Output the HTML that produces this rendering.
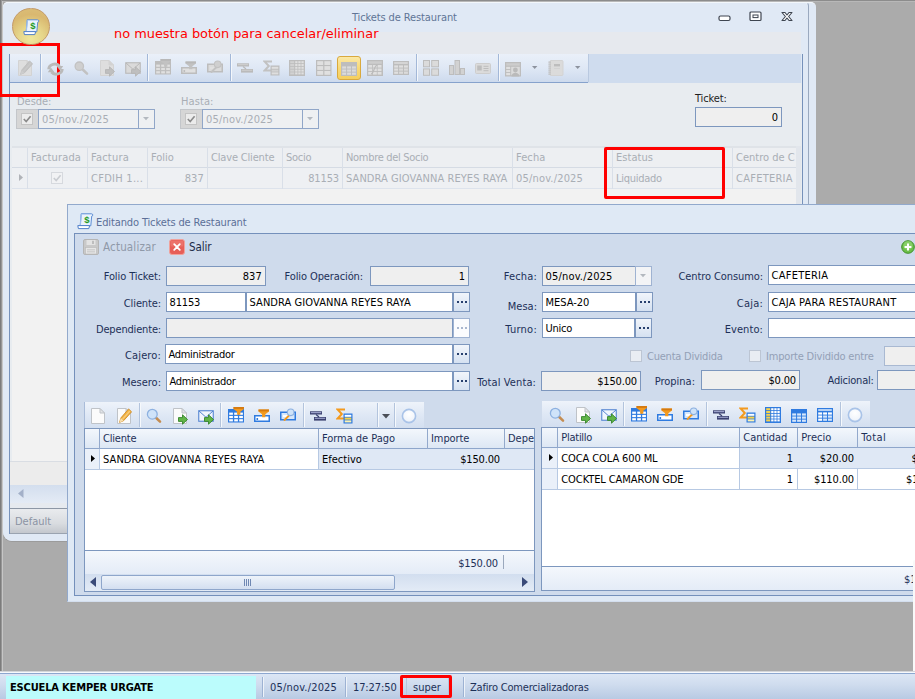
<!DOCTYPE html>
<html lang="es"><head><meta charset="utf-8"><title>Tickets de Restaurant</title>
<style>
html,body{margin:0;padding:0}
body{width:915px;height:699px;overflow:hidden;position:relative;background:#ababab;font:11px "DejaVu Sans Condensed","Liberation Sans",sans-serif;color:#000}
div,span,svg{position:absolute;box-sizing:border-box}
.t{white-space:nowrap;line-height:14px;height:14px;letter-spacing:0}
.g{color:#a9aeb5}
.lbl{color:#1e2f4d}
.f{border:1px solid #7d97be;background:#fff}
.fd{border:1px solid #7d97be;background:#efefef}
.btn{border:1px solid #7d97be;background:linear-gradient(#f1f5fb,#d5e1f1)}
.hd{background:linear-gradient(#f1f5fb,#dbe5f3);border-right:1px solid #94aacd;border-bottom:1px solid #94aacd}

</style></head>
<body>
<div style="left:0px;top:0px;width:915px;height:1px;background:#8c8c8c"></div>
<div style="left:0px;top:1px;width:915px;height:1px;background:#b8b8b8"></div>
<div style="left:0px;top:0px;width:1px;height:672px;background:#7c7c7c"></div>
<div style="left:1px;top:0px;width:1px;height:672px;background:#969696"></div>
<div style="left:2px;top:1px;width:1px;height:671px;background:#c6c6c6"></div>
<div style="left:3px;top:2px;width:812.5px;height:539px;background:#e0e9f5;border-radius:5px 5px 4px 9px;border-top:1px solid #f3f7fb;box-shadow:0 1px 0 #9b9b9b"></div>
<div style="left:3px;top:2px;width:806px;height:539px;background:#e0e9f5;border-radius:5px 4px 0 9px;border-top:1px solid #f3f7fb;border-right:1px solid #9aa9bf"></div>
<div style="left:802px;top:54px;width:1px;height:490px;background:#7691ba"></div>
<div style="left:9px;top:54px;width:1px;height:480px;background:#7691ba"></div>
<div style="left:10px;top:32px;width:791px;height:22px;background:#e6e9ee"></div>
<div style="left:10px;top:54px;width:791px;height:29px;background:#cfdcee"></div>
<div style="left:10px;top:54px;width:578px;height:29px;background:linear-gradient(#eaf0f9 0%,#dfe8f5 50%,#cddaed 100%);border-bottom:1px solid #86a2cc"></div>
<div style="left:10px;top:83px;width:792px;height:451px;background:#e8ecf0"></div>
<span class="t" style="left:352px;top:11px;color:#5f7596;letter-spacing:-0.11px;">Tickets de Restaurant</span>
<div style="left:40px;top:54px;width:1px;height:27px;background:#a3b8d8"></div>
<div style="left:41px;top:54px;width:1px;height:27px;background:#f4f7fb"></div>
<div style="left:147px;top:54px;width:1px;height:27px;background:#a3b8d8"></div>
<div style="left:148px;top:54px;width:1px;height:27px;background:#f4f7fb"></div>
<div style="left:230px;top:54px;width:1px;height:27px;background:#a3b8d8"></div>
<div style="left:231px;top:54px;width:1px;height:27px;background:#f4f7fb"></div>
<div style="left:416px;top:54px;width:1px;height:27px;background:#a3b8d8"></div>
<div style="left:417px;top:54px;width:1px;height:27px;background:#f4f7fb"></div>
<div style="left:498px;top:54px;width:1px;height:27px;background:#a3b8d8"></div>
<div style="left:499px;top:54px;width:1px;height:27px;background:#f4f7fb"></div>
<div style="left:588px;top:54px;width:1px;height:28px;background:#b9c9e0"></div>
<div style="left:337px;top:56px;width:24px;height:24px;background:linear-gradient(#fbe9a6,#f8d978 50%,#f5cf5f);border:1px solid #d9a93e;border-radius:3px"></div>
<span class="t g" style="left:17px;top:95px;letter-spacing:-0.03px;">Desde:</span>
<div style="left:16px;top:109px;width:23px;height:20px;background:#d6d6d6;border:1px solid #c3c6ca"></div>
<div style="left:38px;top:109px;width:101px;height:20px;background:#eef0f2;border:1px solid #90a6c8"></div>
<div style="left:138px;top:109px;width:17px;height:20px;background:#eef0f2;border:1px solid #90a6c8"></div>
<span class="t g" style="left:42px;top:113px;letter-spacing:0.18px;">05/nov./2025</span>
<span class="t g" style="left:181px;top:95px;letter-spacing:0.09px;">Hasta:</span>
<div style="left:180px;top:109px;width:23px;height:20px;background:#d6d6d6;border:1px solid #c3c6ca"></div>
<div style="left:202px;top:109px;width:101px;height:20px;background:#eef0f2;border:1px solid #90a6c8"></div>
<div style="left:302px;top:109px;width:17px;height:20px;background:#eef0f2;border:1px solid #90a6c8"></div>
<span class="t g" style="left:206px;top:113px;letter-spacing:0.18px;">05/nov./2025</span>
<span class="t" style="left:695px;top:92px;color:#1e1e1e;letter-spacing:-0.12px;">Ticket:</span>
<div style="left:695px;top:107px;width:87px;height:20px;background:#efefef;border:1px solid #7d97be"></div>
<span class="t" style="right:137px;top:111px;">0</span>
<div style="left:12px;top:146px;width:784px;height:315px;background:#f2f2f2"></div>
<div style="left:12px;top:146px;width:784px;height:22px;background:#edeff2;border-top:2px solid #dfe3e8;border-bottom:1px solid #d5dbe4"></div>
<div style="left:12px;top:168px;width:784px;height:21px;background:#eef0f3;border-bottom:1px solid #dde3ec"></div>
<div style="left:796px;top:146px;width:5px;height:357px;background:#e2e6ec"></div>
<div style="left:27px;top:148px;width:1px;height:41px;background:#d9dfe8"></div>
<div style="left:87px;top:148px;width:1px;height:41px;background:#d9dfe8"></div>
<div style="left:147px;top:148px;width:1px;height:41px;background:#d9dfe8"></div>
<div style="left:207px;top:148px;width:1px;height:41px;background:#d9dfe8"></div>
<div style="left:282px;top:148px;width:1px;height:41px;background:#d9dfe8"></div>
<div style="left:342px;top:148px;width:1px;height:41px;background:#d9dfe8"></div>
<div style="left:512px;top:148px;width:1px;height:41px;background:#d9dfe8"></div>
<div style="left:612px;top:148px;width:1px;height:41px;background:#d9dfe8"></div>
<div style="left:732px;top:148px;width:1px;height:41px;background:#d9dfe8"></div>
<span class="t g" style="left:31px;top:151px;letter-spacing:0.13px;">Facturada</span>
<span class="t g" style="left:91px;top:151px;letter-spacing:0.22px;">Factura</span>
<span class="t g" style="left:151px;top:151px;letter-spacing:-0.00px;">Folio</span>
<span class="t g" style="left:211px;top:151px;letter-spacing:-0.17px;">Clave Cliente</span>
<span class="t g" style="left:286px;top:151px;letter-spacing:-0.24px;">Socio</span>
<span class="t g" style="left:346px;top:151px;letter-spacing:-0.31px;">Nombre del Socio</span>
<span class="t g" style="left:516px;top:151px;letter-spacing:0.09px;">Fecha</span>
<span class="t g" style="left:616px;top:151px;letter-spacing:0.05px;">Estatus</span>
<span class="t g" style="left:736px;top:151px;">Centro de C</span>
<span class="t g" style="left:91px;top:172px;letter-spacing:0.27px;">CFDIH 1...</span>
<span class="t g" style="right:711px;top:172px;letter-spacing:0.14px;">837</span>
<span class="t g" style="right:576px;top:172px;letter-spacing:-0.14px;">81153</span>
<span class="t g" style="left:346px;top:172px;letter-spacing:0.07px;">SANDRA GIOVANNA REYES RAYA</span>
<span class="t g" style="left:516px;top:172px;letter-spacing:0.18px;">05/nov./2025</span>
<span class="t g" style="left:616px;top:172px;letter-spacing:-0.27px;">Liquidado</span>
<span class="t g" style="left:736px;top:172px;letter-spacing:0.26px;">CAFETERIA</span>
<div style="left:10px;top:461px;width:60px;height:24px;background:#ececec;border-top:1px solid #d9dde3"></div>
<div style="left:10px;top:485px;width:60px;height:18px;background:linear-gradient(#d3deee,#e4ebf5)"></div>
<div style="left:10px;top:503px;width:60px;height:5px;background:#e6eaef"></div>
<div style="left:10px;top:508px;width:60px;height:26px;background:linear-gradient(#e9ebee,#d9dce0 60%,#c3c7cd);border-top:1px solid #8d97a5;border-bottom:1px solid #9aa3b0"></div>
<span class="t" style="left:15px;top:515px;color:#8b93a3;letter-spacing:-0.01px;">Default</span>
<div style="left:67px;top:204px;width:860px;height:398px;background:#dfe9f5;border:1px solid #92a9cc;border-bottom-color:#d3deee"></div>
<div style="left:74px;top:233px;width:860px;height:363px;background:#cfdbec;border:1px solid #7490bb"></div>
<span class="t" style="left:96px;top:216px;color:#5b6f98;letter-spacing:-0.12px;">Editando Tickets de Restaurant</span>
<span class="t" style="left:103px;top:240px;color:#8f99a8;font-size:11.5px;letter-spacing:0.17px;">Actualizar</span>
<span class="t" style="left:189px;top:240px;color:#1b2a47;font-size:11.5px;letter-spacing:-0.08px;">Salir</span>
<span class="t" style="right:754px;top:270px;color:#1d3058;letter-spacing:-0.10px;">Folio Ticket:</span>
<div class="fd" style="left:166px;top:266px;width:100px;height:20px;"></div>
<span class="t" style="right:653px;top:270px;letter-spacing:0.14px;">837</span>
<span class="t" style="right:552px;top:270px;color:#1d3058;letter-spacing:-0.11px;">Folio Operación:</span>
<div class="fd" style="left:370px;top:266px;width:99px;height:20px;"></div>
<span class="t" style="right:450px;top:270px;">1</span>
<span class="t" style="right:754px;top:296.5px;color:#1d3058;letter-spacing:-0.11px;">Cliente:</span>
<div class="f" style="left:166px;top:292px;width:80px;height:20px;"></div>
<span class="t" style="left:169.5px;top:296px;letter-spacing:-0.14px;">81153</span>
<div class="f" style="left:246px;top:292px;width:207px;height:20px;"></div>
<span class="t" style="left:249.5px;top:296px;letter-spacing:0.07px;">SANDRA GIOVANNA REYES RAYA</span>
<div class="btn" style="left:453px;top:292px;width:17px;height:20px;border-color:#7d97be"><i style="position:absolute;left:3px;top:8px;width:2px;height:2px;background:#27406e;box-shadow:4px 0 #27406e,8px 0 #27406e"></i></div>
<span class="t" style="right:754px;top:323px;color:#1d3058;letter-spacing:-0.17px;">Dependiente:</span>
<div class="fd" style="left:166px;top:318px;width:287px;height:20px;"></div>
<div class="btn" style="left:453px;top:318px;width:17px;height:20px;background:#fbfcfe;border-color:#9fb3d2"><i style="position:absolute;left:3px;top:8px;width:2px;height:2px;background:#a9b7cf;box-shadow:4px 0 #a9b7cf,8px 0 #a9b7cf"></i></div>
<span class="t" style="right:754px;top:349px;color:#1d3058;letter-spacing:0.14px;">Cajero:</span>
<div class="f" style="left:165px;top:344px;width:288px;height:20px;"></div>
<span class="t" style="left:168.5px;top:348px;letter-spacing:-0.30px;">Administrador</span>
<div class="btn" style="left:453px;top:344px;width:17px;height:20px;border-color:#7d97be"><i style="position:absolute;left:3px;top:8px;width:2px;height:2px;background:#27406e;box-shadow:4px 0 #27406e,8px 0 #27406e"></i></div>
<span class="t" style="right:754px;top:376px;color:#1d3058;letter-spacing:-0.01px;">Mesero:</span>
<div class="f" style="left:166px;top:371px;width:287px;height:20px;"></div>
<span class="t" style="left:169.5px;top:375px;letter-spacing:-0.30px;">Administrador</span>
<div class="btn" style="left:453px;top:371px;width:17px;height:20px;border-color:#7d97be"><i style="position:absolute;left:3px;top:8px;width:2px;height:2px;background:#27406e;box-shadow:4px 0 #27406e,8px 0 #27406e"></i></div>
<span class="t" style="right:378px;top:270px;color:#1d3058;letter-spacing:0.15px;">Fecha:</span>
<div class="fd" style="left:542px;top:266px;width:94px;height:20px;"></div>
<span class="t" style="left:545.5px;top:270px;letter-spacing:0.18px;">05/nov./2025</span>
<div style="left:635px;top:266px;width:17px;height:20px;background:#f3f4f6;border:1px solid #9fb3d2"></div>
<span class="t" style="right:378px;top:299.5px;color:#1d3058;letter-spacing:0.00px;">Mesa:</span>
<div class="f" style="left:542px;top:292px;width:94px;height:20px;"></div>
<span class="t" style="left:545.5px;top:296px;letter-spacing:-0.04px;">MESA-20</span>
<div class="btn" style="left:636px;top:292px;width:17px;height:20px;border-color:#7d97be"><i style="position:absolute;left:3px;top:8px;width:2px;height:2px;background:#27406e;box-shadow:4px 0 #27406e,8px 0 #27406e"></i></div>
<span class="t" style="right:378px;top:323px;color:#1d3058;letter-spacing:0.25px;">Turno:</span>
<div class="f" style="left:542px;top:318px;width:93px;height:20px;"></div>
<span class="t" style="left:545.5px;top:322px;letter-spacing:-0.23px;">Unico</span>
<div class="btn" style="left:635px;top:318px;width:17px;height:20px;border-color:#7d97be"><i style="position:absolute;left:3px;top:8px;width:2px;height:2px;background:#27406e;box-shadow:4px 0 #27406e,8px 0 #27406e"></i></div>
<span class="t" style="right:379px;top:375.5px;color:#1d3058;letter-spacing:0.10px;">Total Venta:</span>
<div class="fd" style="left:541px;top:371px;width:100px;height:20px;"></div>
<span class="t" style="right:278px;top:375px;letter-spacing:-0.15px;">$150.00</span>
<span class="t" style="right:152px;top:270px;color:#1d3058;letter-spacing:-0.09px;">Centro Consumo:</span>
<div class="f" style="left:768px;top:265px;width:160px;height:20px;"></div>
<span class="t" style="left:771.5px;top:269px;letter-spacing:0.26px;">CAFETERIA</span>
<span class="t" style="right:152px;top:297px;color:#1d3058;letter-spacing:0.21px;">Caja:</span>
<div class="f" style="left:768px;top:292px;width:160px;height:20px;"></div>
<span class="t" style="left:771.5px;top:296px;letter-spacing:0.25px;">CAJA PARA RESTAURANT</span>
<span class="t" style="right:152px;top:323px;color:#1d3058;letter-spacing:0.08px;">Evento:</span>
<div class="f" style="left:768px;top:318px;width:160px;height:20px;"></div>
<div style="left:630px;top:350px;width:12px;height:12px;background:#e9edf3;border:1px solid #bcc5d3"></div>
<span class="t" style="left:647px;top:350px;color:#93a0b6;letter-spacing:-0.23px;">Cuenta Dividida</span>
<div style="left:749px;top:350px;width:12px;height:12px;background:#e9edf3;border:1px solid #bcc5d3"></div>
<span class="t" style="left:766px;top:350px;color:#93a0b6;letter-spacing:-0.19px;">Importe Dividido entre</span>
<div style="left:884px;top:346px;width:50px;height:20px;background:#efefef;border:1px solid #a9b9d2"></div>
<span class="t" style="right:220px;top:375px;color:#1d3058;letter-spacing:-0.01px;">Propina:</span>
<div class="fd" style="left:701px;top:370px;width:99px;height:20px;"></div>
<span class="t" style="right:119px;top:374px;letter-spacing:-0.15px;">$0.00</span>
<span class="t" style="right:41.299999999999955px;top:374px;color:#1d3058;letter-spacing:-0.21px;">Adicional:</span>
<div class="fd" style="left:877px;top:370px;width:60px;height:20px;"></div>
<div style="left:84px;top:402px;width:340px;height:26px;background:linear-gradient(#eef3fa,#dfe8f5 50%,#d3dff0)"></div>
<div style="left:139px;top:403px;width:1px;height:24px;background:#b3c4dd"></div>
<div style="left:140px;top:403px;width:1px;height:24px;background:#f6f9fc"></div>
<div style="left:220px;top:403px;width:1px;height:24px;background:#b3c4dd"></div>
<div style="left:221px;top:403px;width:1px;height:24px;background:#f6f9fc"></div>
<div style="left:303px;top:403px;width:1px;height:24px;background:#b3c4dd"></div>
<div style="left:304px;top:403px;width:1px;height:24px;background:#f6f9fc"></div>
<div style="left:377px;top:403px;width:1px;height:24px;background:#b3c4dd"></div>
<div style="left:378px;top:403px;width:1px;height:24px;background:#f6f9fc"></div>
<div style="left:394px;top:403px;width:1px;height:24px;background:#b3c4dd"></div>
<div style="left:395px;top:403px;width:1px;height:24px;background:#f6f9fc"></div>
<div style="left:84px;top:402px;width:1px;height:26px;background:#a9bcd9"></div>
<div style="left:84px;top:428px;width:451px;height:164px;background:#fff;border:1px solid #7d97be"></div>
<div style="left:85px;top:429px;width:449px;height:20px;background:linear-gradient(#f3f7fc,#dde7f4);border-bottom:1px solid #8ea6cb"></div>
<div style="left:99px;top:429px;width:1px;height:20px;background:#93a9cc"></div>
<div style="left:99px;top:449px;width:1px;height:20px;background:#b7c9e3"></div>
<div style="left:318px;top:429px;width:1px;height:20px;background:#93a9cc"></div>
<div style="left:318px;top:449px;width:1px;height:20px;background:#b7c9e3"></div>
<div style="left:427px;top:429px;width:1px;height:20px;background:#93a9cc"></div>
<div style="left:427px;top:449px;width:1px;height:20px;background:#b7c9e3"></div>
<div style="left:504px;top:429px;width:1px;height:20px;background:#93a9cc"></div>
<div style="left:504px;top:449px;width:1px;height:20px;background:#b7c9e3"></div>
<div style="left:85px;top:449px;width:14px;height:20px;background:#eaf0f9"></div>
<div style="left:100px;top:449px;width:218px;height:20px;background:#fff"></div>
<div style="left:319px;top:449px;width:215px;height:20px;background:#dfe8f5"></div>
<div style="left:85px;top:469px;width:449px;height:1px;background:#b7c9e3"></div>
<span class="t" style="left:103px;top:432px;color:#1d3058;letter-spacing:-0.19px;">Cliente</span>
<span class="t" style="left:322px;top:432px;color:#1d3058;letter-spacing:-0.04px;">Forma de Pago</span>
<span class="t" style="left:431px;top:432px;color:#1d3058;letter-spacing:-0.09px;">Importe</span>
<span class="t" style="left:508px;top:432px;color:#1d3058;">Depe</span>
<span class="t" style="left:103px;top:453px;letter-spacing:0.07px;">SANDRA GIOVANNA REYES RAYA</span>
<span class="t" style="left:322px;top:453px;letter-spacing:0.01px;">Efectivo</span>
<span class="t" style="right:415px;top:453px;letter-spacing:-0.15px;">$150.00</span>
<div style="left:85px;top:550px;width:449px;height:24px;background:linear-gradient(#f4f7fc,#e4ecf7);border-top:1px solid #7d97be"></div>
<span class="t" style="right:417px;top:557px;color:#1d3058;letter-spacing:-0.15px;">$150.00</span>
<div style="left:503px;top:555px;width:1px;height:14px;background:#9aa8bd"></div>
<div style="left:85px;top:574px;width:449px;height:17px;background:linear-gradient(#d2deef,#e3ebf6)"></div>
<div style="left:101px;top:575px;width:294px;height:15px;background:linear-gradient(#eef3fa,#d3dff0);border:1px solid #8ea6cb;border-radius:2px"></div>
<div style="left:244px;top:579px;width:1px;height:7px;background:#6f88b3"></div>
<div style="left:246px;top:579px;width:1px;height:7px;background:#6f88b3"></div>
<div style="left:248px;top:579px;width:1px;height:7px;background:#6f88b3"></div>
<div style="left:250px;top:579px;width:1px;height:7px;background:#6f88b3"></div>
<div style="left:542px;top:401px;width:328px;height:26px;background:linear-gradient(#eef3fa,#dfe8f5 50%,#d3dff0)"></div>
<div style="left:623px;top:402px;width:1px;height:24px;background:#b3c4dd"></div>
<div style="left:624px;top:402px;width:1px;height:24px;background:#f6f9fc"></div>
<div style="left:706px;top:402px;width:1px;height:24px;background:#b3c4dd"></div>
<div style="left:707px;top:402px;width:1px;height:24px;background:#f6f9fc"></div>
<div style="left:840px;top:402px;width:1px;height:24px;background:#b3c4dd"></div>
<div style="left:841px;top:402px;width:1px;height:24px;background:#f6f9fc"></div>
<div style="left:541px;top:427px;width:400px;height:164px;background:#fff;border:1px solid #7d97be"></div>
<div style="left:542px;top:428px;width:398px;height:20px;background:linear-gradient(#f3f7fc,#dde7f4);border-bottom:1px solid #8ea6cb"></div>
<div style="left:557px;top:428px;width:1px;height:20px;background:#93a9cc"></div>
<div style="left:557px;top:448px;width:1px;height:42px;background:#b7c9e3"></div>
<div style="left:739px;top:428px;width:1px;height:20px;background:#93a9cc"></div>
<div style="left:739px;top:448px;width:1px;height:42px;background:#b7c9e3"></div>
<div style="left:797px;top:428px;width:1px;height:20px;background:#93a9cc"></div>
<div style="left:797px;top:448px;width:1px;height:42px;background:#b7c9e3"></div>
<div style="left:857px;top:428px;width:1px;height:20px;background:#93a9cc"></div>
<div style="left:857px;top:448px;width:1px;height:42px;background:#b7c9e3"></div>
<div style="left:542px;top:448px;width:15px;height:41px;background:#eaf0f9"></div>
<div style="left:558px;top:448px;width:181px;height:20px;background:#fff"></div>
<div style="left:740px;top:448px;width:200px;height:20px;background:#dfe8f5"></div>
<div style="left:542px;top:468px;width:398px;height:1px;background:#b7c9e3"></div>
<div style="left:542px;top:489px;width:398px;height:1px;background:#b7c9e3"></div>
<span class="t" style="left:561.3px;top:431px;color:#1d3058;letter-spacing:-0.27px;">Platillo</span>
<span class="t" style="left:743.3px;top:431px;color:#1d3058;letter-spacing:-0.06px;">Cantidad</span>
<span class="t" style="left:801.3px;top:431px;color:#1d3058;letter-spacing:-0.01px;">Precio</span>
<span class="t" style="left:861.3px;top:431px;color:#1d3058;letter-spacing:0.36px;">Total</span>
<span class="t" style="left:561.3px;top:452px;letter-spacing:-0.11px;">COCA COLA 600 ML</span>
<span class="t" style="right:122px;top:452px;">1</span>
<span class="t" style="right:61px;top:452px;letter-spacing:-0.07px;">$20.00</span>
<span class="t" style="left:911.5px;top:452px;letter-spacing:-0.07px;">$20.00</span>
<span class="t" style="left:561.3px;top:473px;letter-spacing:-0.09px;">COCKTEL CAMARON GDE</span>
<span class="t" style="right:122px;top:473px;">1</span>
<span class="t" style="right:61px;top:473px;letter-spacing:-0.13px;">$110.00</span>
<span class="t" style="left:906px;top:473px;letter-spacing:-0.13px;">$110.00</span>
<div style="left:542px;top:566px;width:398px;height:24px;background:linear-gradient(#f4f7fc,#e4ecf7);border-top:1px solid #7d97be"></div>
<span class="t" style="left:904px;top:573px;color:#1d3058;">$130.00</span>
<div style="left:913px;top:560px;width:2px;height:120px;background:#f9f9f9;border-radius:2px 0 0 2px"></div>
<div style="left:0px;top:671px;width:915px;height:1px;background:#d4d6d9"></div>
<div style="left:0px;top:672px;width:915px;height:27px;background:linear-gradient(#dde7f5,#cfdcee 45%,#b8cae3);border-top:1px solid #f7f9fc"></div>
<div style="left:0px;top:673px;width:915px;height:1px;background:#8ca7cf"></div>
<div style="left:6px;top:676px;width:250px;height:23px;background:#bbfcfc"></div>
<span class="t" style="left:10px;top:681px;font-weight:bold;letter-spacing:-0.16px;">ESCUELA KEMPER URGATE</span>
<div style="left:406px;top:678px;width:1px;height:18px;background:#b5c6de"></div>
<div style="left:448px;top:678px;width:1px;height:18px;background:#b5c6de"></div>
<div style="left:262px;top:677px;width:1px;height:20px;background:#9db2d3"></div>
<div style="left:263px;top:677px;width:1px;height:20px;background:#eef3f9"></div>
<div style="left:345px;top:677px;width:1px;height:20px;background:#9db2d3"></div>
<div style="left:346px;top:677px;width:1px;height:20px;background:#eef3f9"></div>
<div style="left:463px;top:677px;width:1px;height:20px;background:#9db2d3"></div>
<div style="left:464px;top:677px;width:1px;height:20px;background:#eef3f9"></div>
<span class="t" style="left:270px;top:681px;color:#1d3058;letter-spacing:0.18px;">05/nov./2025</span>
<span class="t" style="left:353px;top:681px;color:#1d3058;letter-spacing:-0.11px;">17:27:50</span>
<span class="t" style="left:413px;top:681px;color:#1d3058;letter-spacing:0.01px;">super</span>
<span class="t" style="left:470px;top:681px;color:#1d3058;letter-spacing:-0.19px;">Zafiro Comercializadoras</span>
<div style="left:0px;top:43px;width:60px;height:53.5px;border:3px solid #f00;border-left-width:2px"></div>
<div style="left:604px;top:147px;width:121px;height:51.5px;border:3px solid #f00;border-radius:2px"></div>
<div style="left:400px;top:675px;width:52px;height:23px;border:3px solid #f00;border-radius:2px"></div>
<span class="t" style="left:114px;top:25px;color:#f00;font:12.9px 'DejaVu Sans','Liberation Sans',sans-serif;line-height:18px;height:18px;letter-spacing:0.00px;">no muestra botón para cancelar/eliminar</span>
<svg style="left:18px;top:60px;" width="15" height="16" viewBox="0 0 15 16"><path d="M0.5,0.5h8.5l4.5,4.5v10.5h-13z" fill="#dedede" stroke="#d3d3d3"/><path d="M9,0.5v4.5h4.5z" fill="#d2d2d2" stroke="#d3d3d3" stroke-linejoin="round"/><path d="M11.6,0.9l3,2.9l-8,8.9l-4.1,1.7l1.3,-4.4z" fill="#c4c4c4" stroke="#bcbcbc" stroke-width="0.8" stroke-linejoin="round"/><path d="M3.8,10l2.8,2.7l-4.1,1.7z" fill="#cdcdcd"/><path d="M12.4,2.6l1,1l-7.4,8.2l-1,-1z" fill="#cdcdcd" opacity="0.55"/></svg>
<svg style="left:47px;top:61px;" width="17" height="16" viewBox="0 0 17 16"><path d="M1.8,8.2A6,5.2 0 0 1 12.6,5.2" fill="none" stroke="#bababa" stroke-width="3"/><path d="M9.6,5h6.6l-3.1,4.8z" fill="#bababa"/><path d="M15.2,8A6,5.2 0 0 1 4.4,11" fill="none" stroke="#bababa" stroke-width="3"/><path d="M0.8,11.2h6.6l-3.5,-4.8z" fill="#bababa"/></svg>
<svg style="left:73px;top:60px;" width="16" height="16" viewBox="0 0 16 16"><line x1="10" y1="9.8" x2="14" y2="13.6" stroke="#c2c2c2" stroke-width="2.6" stroke-linecap="round"/><circle cx="6.3" cy="6.2" r="4.2" fill="#cfcfcf" stroke="#c2c2c2" stroke-width="1.3"/></svg>
<svg style="left:100px;top:60px;" width="16" height="17" viewBox="0 0 16 17"><path d="M0.5,0.5h8.5l4.5,4.5v10.5h-13z" fill="#dedede" stroke="#d3d3d3"/><path d="M9,0.5v4.5h4.5z" fill="#d2d2d2" stroke="#d3d3d3" stroke-linejoin="round"/><path transform="translate(5,6)" d="M0.5,3.6h4v-2.8l5,4.7l-5,4.7v-2.8h-4z" fill="#bfbfbf" stroke="#b5b5b5" stroke-width="0.9" stroke-linejoin="round"/></svg>
<svg style="left:125px;top:60px;" width="17" height="17" viewBox="0 0 17 17"><rect x="0.75" y="2.75" width="14.5" height="10.5" fill="#dadada" stroke="#b9b9b9" stroke-width="1.1"/><path d="M1,3l7,6.3l7,-6.3" fill="none" stroke="#b9b9b9" stroke-width="1"/><path transform="translate(6,6)" d="M0.5,3.6h4v-2.8l5,4.7l-5,4.7v-2.8h-4z" fill="#bfbfbf" stroke="#b5b5b5" stroke-width="0.9" stroke-linejoin="round"/></svg>
<svg style="left:155px;top:59px;" width="16" height="16" viewBox="0 0 16 16"><rect x="0" y="2" width="16" height="13.5" fill="#bdbdbd"/><rect x="1.2" y="5.6" width="3.7" height="2.2" fill="#e0e0e0"/><rect x="6.2" y="5.6" width="3.7" height="2.2" fill="#e0e0e0"/><rect x="11.2" y="5.6" width="3.7" height="2.2" fill="#e0e0e0"/><rect x="1.2" y="8.899999999999999" width="3.7" height="2.2" fill="#e0e0e0"/><rect x="6.2" y="8.899999999999999" width="3.7" height="2.2" fill="#e0e0e0"/><rect x="11.2" y="8.899999999999999" width="3.7" height="2.2" fill="#e0e0e0"/><rect x="1.2" y="12.2" width="3.7" height="2.2" fill="#e0e0e0"/><rect x="6.2" y="12.2" width="3.7" height="2.2" fill="#e0e0e0"/><rect x="11.2" y="12.2" width="3.7" height="2.2" fill="#e0e0e0"/><path transform="translate(5.5,0) scale(0.95)" d="M0,0h11v2.2l-3.8,2.8v3.2h-3.4v-3.2l-3.8,-2.8z" fill="#c2c2c2"/><path transform="translate(5.5,0) scale(0.95)" d="M0,0h11v2h-11z" fill="#b8b8b8"/></svg>
<svg style="left:181px;top:60px;" width="16" height="16" viewBox="0 0 16 16"><rect x="0.75" y="7.75" width="14.5" height="5.5" fill="#e0e0e0" stroke="#bdbdbd" stroke-width="1.5"/><rect x="2.5" y="10" width="1.6" height="2" fill="#bdbdbd"/><path transform="translate(4.5,1.5) scale(0.95)" d="M0,0h11v2.2l-3.8,2.8v3.2h-3.4v-3.2l-3.8,-2.8z" fill="#c2c2c2"/><path transform="translate(4.5,1.5) scale(0.95)" d="M0,0h11v2h-11z" fill="#b8b8b8"/></svg>
<svg style="left:207px;top:59px;" width="16" height="16" viewBox="0 0 16 16"><rect x="0.75" y="5.25" width="14.5" height="7.5" fill="#dbdbdb" stroke="#bdbdbd" stroke-width="1.5"/><rect x="3" y="8" width="6" height="2" fill="#e0e0e0"/><line x1="9" y1="8.5" x2="4.5" y2="13" stroke="#c2c2c2" stroke-width="1.8" stroke-linecap="round"/><circle cx="10.7" cy="5.3" r="3.3" fill="#cfcfcf" stroke="#c2c2c2" stroke-width="1.1"/></svg>
<svg style="left:237px;top:60px;" width="16" height="16" viewBox="0 0 16 16"><rect x="0" y="3.3" width="12" height="3.2" fill="#bababa"/><rect x="0.8" y="4" width="10.4" height="1.2" fill="#cdcdcd"/><rect x="4" y="9" width="12" height="3.6" fill="#bababa"/><rect x="4.8" y="9.7" width="10.4" height="1.2" fill="#cdcdcd"/><path d="M6,6.5l3,2.5" stroke="#bababa" stroke-width="1.2"/></svg>
<svg style="left:263px;top:60px;" width="17" height="16" viewBox="0 0 17 16"><path d="M9,1.4h-7.4l4.2,4.6l-4.2,4.6h7.4" fill="none" stroke="#c2c2c2" stroke-width="2" stroke-linejoin="miter"/><rect x="7.5" y="5.5" width="9" height="10" fill="#bdbdbd"/><rect x="8.7" y="6.8" width="6.6" height="2" fill="#e0e0e0"/><rect x="8.7" y="9.6" width="6.6" height="2" fill="#d2d2d2"/><rect x="8.7" y="12.4" width="6.6" height="2" fill="#dedede"/></svg>
<svg style="left:289px;top:60px;" width="16" height="16" viewBox="0 0 16 16"><rect x="0" y="0" width="16" height="16" fill="#bdbdbd"/><rect x="1.2" y="1.2" width="4" height="2" fill="#d2d2d2"/><rect x="6.2" y="1.2" width="2.3" height="2" fill="#e0e0e0"/><rect x="9.3" y="1.2" width="2.3" height="2" fill="#e0e0e0"/><rect x="12.4" y="1.2" width="2.3" height="2" fill="#e0e0e0"/><rect x="1.2" y="4.0" width="4" height="2" fill="#d2d2d2"/><rect x="6.2" y="4.0" width="2.3" height="2" fill="#e0e0e0"/><rect x="9.3" y="4.0" width="2.3" height="2" fill="#e0e0e0"/><rect x="12.4" y="4.0" width="2.3" height="2" fill="#e0e0e0"/><rect x="1.2" y="6.8" width="4" height="2" fill="#d2d2d2"/><rect x="6.2" y="6.8" width="2.3" height="2" fill="#e0e0e0"/><rect x="9.3" y="6.8" width="2.3" height="2" fill="#e0e0e0"/><rect x="12.4" y="6.8" width="2.3" height="2" fill="#e0e0e0"/><rect x="1.2" y="9.599999999999998" width="4" height="2" fill="#d2d2d2"/><rect x="6.2" y="9.599999999999998" width="2.3" height="2" fill="#e0e0e0"/><rect x="9.3" y="9.599999999999998" width="2.3" height="2" fill="#e0e0e0"/><rect x="12.4" y="9.599999999999998" width="2.3" height="2" fill="#e0e0e0"/><rect x="1.2" y="12.399999999999999" width="4" height="2" fill="#d2d2d2"/><rect x="6.2" y="12.399999999999999" width="2.3" height="2" fill="#e0e0e0"/><rect x="9.3" y="12.399999999999999" width="2.3" height="2" fill="#e0e0e0"/><rect x="12.4" y="12.399999999999999" width="2.3" height="2" fill="#e0e0e0"/></svg>
<svg style="left:316px;top:60px;" width="16" height="16" viewBox="0 0 16 16"><rect x="0" y="0" width="15.5" height="16" fill="#bdbdbd"/><rect x="1.2" y="1.2" width="6" height="3.8" fill="#e0e0e0"/><rect x="8.4" y="1.2" width="6" height="3.8" fill="#e0e0e0"/><rect x="1.2" y="6.1000000000000005" width="6" height="3.8" fill="#e0e0e0"/><rect x="8.4" y="6.1000000000000005" width="6" height="3.8" fill="#e0e0e0"/><rect x="1.2" y="11.0" width="6" height="3.8" fill="#e0e0e0"/><rect x="8.4" y="11.0" width="6" height="3.8" fill="#e0e0e0"/></svg>
<svg style="left:341px;top:62px;" width="16" height="14" viewBox="0 0 16 14"><rect x="0" y="0" width="16" height="14" fill="#bdbdbd"/><rect x="1.2" y="4.4" width="3.9" height="2.20" fill="#dbdbdb"/><rect x="6.1000000000000005" y="4.4" width="3.9" height="2.20" fill="#dbdbdb"/><rect x="11.0" y="4.4" width="3.9" height="2.20" fill="#dbdbdb"/><rect x="1.2" y="7.5" width="3.9" height="2.20" fill="#dbdbdb"/><rect x="6.1000000000000005" y="7.5" width="3.9" height="2.20" fill="#dbdbdb"/><rect x="11.0" y="7.5" width="3.9" height="2.20" fill="#dbdbdb"/><rect x="1.2" y="10.6" width="3.9" height="2.20" fill="#dbdbdb"/><rect x="6.1000000000000005" y="10.6" width="3.9" height="2.20" fill="#dbdbdb"/><rect x="11.0" y="10.6" width="3.9" height="2.20" fill="#dbdbdb"/></svg>
<svg style="left:367px;top:60px;" width="16" height="16" viewBox="0 0 16 16"><rect x="0" y="0" width="16" height="16" fill="#bdbdbd"/><rect x="1.2" y="1.2" width="13.6" height="2.6" fill="#cdcdcd"/><rect x="1.2" y="5.0" width="3.9" height="2.6" fill="#e0e0e0"/><rect x="5.9" y="5.0" width="3.9" height="2.6" fill="#e0e0e0"/><rect x="10.6" y="5.0" width="3.9" height="2.6" fill="#e0e0e0"/><rect x="1.2" y="8.5" width="3.9" height="2.6" fill="#e0e0e0"/><rect x="5.9" y="8.5" width="3.9" height="2.6" fill="#e0e0e0"/><rect x="10.6" y="8.5" width="3.9" height="2.6" fill="#e0e0e0"/><rect x="1.2" y="12.0" width="3.9" height="2.6" fill="#e0e0e0"/><rect x="5.9" y="12.0" width="3.9" height="2.6" fill="#e0e0e0"/><rect x="10.6" y="12.0" width="3.9" height="2.6" fill="#e0e0e0"/><path d="M4,14c3,0 3,-9 6.5,-9" fill="none" stroke="#bababa" stroke-width="1.2"/></svg>
<svg style="left:393px;top:61px;" width="16" height="14" viewBox="0 0 16 14"><rect x="0" y="0" width="16" height="14" fill="#bdbdbd"/><rect x="1.2" y="1.2" width="13.6" height="1.6" fill="#dbdbdb"/><rect x="1.2" y="4.4" width="3.9" height="2.2" fill="#e0e0e0"/><rect x="6.1000000000000005" y="4.4" width="3.9" height="2.2" fill="#e0e0e0"/><rect x="11.0" y="4.4" width="3.9" height="2.2" fill="#e0e0e0"/><rect x="1.2" y="7.5" width="3.9" height="2.2" fill="#e0e0e0"/><rect x="6.1000000000000005" y="7.5" width="3.9" height="2.2" fill="#dbdbdb"/><rect x="11.0" y="7.5" width="3.9" height="2.2" fill="#dbdbdb"/><rect x="1.2" y="10.600000000000001" width="3.9" height="2.2" fill="#e0e0e0"/><rect x="6.1000000000000005" y="10.600000000000001" width="3.9" height="2.2" fill="#dbdbdb"/><rect x="11.0" y="10.600000000000001" width="3.9" height="2.2" fill="#dbdbdb"/></svg>
<svg style="left:423px;top:60px;" width="16" height="16" viewBox="0 0 16 16"><rect x="0.5" y="0.5" width="6" height="6.3" fill="#dbdbdb" stroke="#bdbdbd"/><rect x="8.7" y="0.5" width="6.8" height="6.3" fill="#dbdbdb" stroke="#bdbdbd"/><rect x="0.5" y="8.9" width="6" height="6.4" fill="#dbdbdb" stroke="#bdbdbd"/><rect x="8.7" y="8.9" width="6.8" height="6.4" fill="#dbdbdb" stroke="#bdbdbd"/></svg>
<svg style="left:449px;top:60px;" width="16" height="16" viewBox="0 0 16 16"><rect x="0.5" y="5.5" width="4" height="9" fill="#d2d2d2" stroke="#bdbdbd"/><rect x="6.0" y="0.5" width="4.5" height="14" fill="#d2d2d2" stroke="#bdbdbd"/><rect x="11.5" y="8.5" width="4" height="6" fill="#d2d2d2" stroke="#bdbdbd"/></svg>
<svg style="left:475px;top:63px;" width="16" height="11" viewBox="0 0 16 11"><rect x="0.5" y="0.5" width="15" height="10" rx="1" fill="#dbdbdb" stroke="#cdcdcd"/><rect x="2.2" y="2.5" width="4.5" height="5" fill="#bdbdbd"/><rect x="8.5" y="2.8" width="5" height="1" fill="#bdbdbd"/><rect x="8.5" y="5" width="5" height="1" fill="#bdbdbd"/><rect x="8.5" y="7.2" width="5" height="1" fill="#bdbdbd"/></svg>
<svg style="left:505px;top:62px;" width="16" height="15" viewBox="0 0 16 15"><rect x="0" y="0" width="16" height="14.5" fill="#bdbdbd"/><rect x="1.2" y="1.2" width="13.6" height="2.4" fill="#cdcdcd"/><rect x="1.2" y="4.8" width="4" height="2.2" fill="#e0e0e0"/><rect x="1.2" y="7.9" width="4" height="2.2" fill="#e0e0e0"/><rect x="1.2" y="11.0" width="4" height="2.2" fill="#e0e0e0"/><rect x="6.2" y="4.8" width="8.6" height="8.5" fill="#dbdbdb"/><circle cx="10.4" cy="8" r="2.4" fill="#bababa"/><path d="M6.4,14.5c0,-5 8,-5 8,0z" fill="#bababa"/></svg>
<svg style="left:532px;top:66px;" width="6.4" height="3.97" viewBox="0 0 6.4 3.97"><path d="M0,0h5.4l-2.7,2.97z" fill="#8d939e"/></svg>
<svg style="left:548px;top:60px;" width="16" height="16" viewBox="0 0 16 16"><rect x="2" y="0.5" width="13" height="15" rx="1" fill="#dbdbdb" stroke="#d3d3d3"/><rect x="0.3" y="1.6" width="2.6" height="1" fill="#bababa"/><rect x="0.3" y="3.6" width="2.6" height="1" fill="#bababa"/><rect x="0.3" y="5.6" width="2.6" height="1" fill="#bababa"/><rect x="0.3" y="7.6" width="2.6" height="1" fill="#bababa"/><rect x="0.3" y="9.6" width="2.6" height="1" fill="#bababa"/><rect x="0.3" y="11.6" width="2.6" height="1" fill="#bababa"/><rect x="0.3" y="13.6" width="2.6" height="1" fill="#bababa"/><rect x="6" y="4" width="6" height="2.4" fill="#bdbdbd"/><rect x="6" y="8" width="6" height="1" fill="#d2d2d2"/></svg>
<svg style="left:575px;top:66px;" width="6.4" height="3.97" viewBox="0 0 6.4 3.97"><path d="M0,0h5.4l-2.7,2.97z" fill="#8d939e"/></svg>
<div style="left:12.2px;top:7.8px;width:37.6px;height:37.6px;border-radius:50%;background:radial-gradient(circle at 50% 85%,#efe79d 0%,#e6d68a 35%,#d9b870 70%,#dcc07a 100%);border:1px solid #c39a68"></div>
<svg style="left:23px;top:19px;" width="17" height="17" viewBox="0 0 17 17"><g transform="scale(1.0)"><path d="M4.2,0.8h10.3c1.6,0 1.8,2.2 0.2,2.4l-0.9,9.6h-10.6z" fill="#eaf2fc" stroke="#4d82d0" stroke-width="0.9" stroke-linejoin="round"/><path d="M4.3,1l-1,11.8h5" fill="none" stroke="#9fc0ee" stroke-width="1.2"/><path d="M0.8,12.6h11.8l-0.8,3h-10.4z" fill="#ffffff" stroke="#3f73c5" stroke-width="0.9" stroke-linejoin="round"/><text x="7.2" y="10" font-family="Liberation Sans, sans-serif" font-weight="bold" font-size="9.5" fill="#1e9a1e">$</text></g></svg>
<svg style="left:718px;top:13px;" width="15" height="10" viewBox="0 0 15 10"><rect x="1" y="3" width="11" height="4.5" rx="1.5" fill="#fff" stroke="#3e4550" stroke-width="1.2"/></svg>
<svg style="left:749px;top:11px;" width="14" height="12" viewBox="0 0 14 12"><rect x="1" y="1" width="11" height="8.5" rx="1" fill="#fff" stroke="#3e4550" stroke-width="1.2"/><rect x="4" y="4" width="5" height="2.6" fill="none" stroke="#3e4550" stroke-width="1"/></svg>
<svg style="left:780px;top:11px;" width="14" height="12" viewBox="0 0 14 12"><path d="M2,1.5h3l2,2.5l2,-2.5h3l-3.4,4l3.4,4h-3l-2,-2.5l-2,2.5h-3l3.4,-4z" fill="#fff" stroke="#3e4550" stroke-width="1.1" stroke-linejoin="round"/></svg>
<svg style="left:21px;top:113px;" width="12" height="12" viewBox="0 0 12 12"><rect x="0.5" y="0.5" width="11" height="11" fill="#ececec" stroke="#c4c4c4"/><path d="M2.8,6l2.4,2.6l4.4,-5.4" fill="none" stroke="#8b8b8b" stroke-width="1.6"/></svg>
<svg style="left:185px;top:113px;" width="12" height="12" viewBox="0 0 12 12"><rect x="0.5" y="0.5" width="11" height="11" fill="#ececec" stroke="#c4c4c4"/><path d="M2.8,6l2.4,2.6l4.4,-5.4" fill="none" stroke="#8b8b8b" stroke-width="1.6"/></svg>
<svg style="left:143px;top:117px;" width="7" height="4.3" viewBox="0 0 7 4.3"><path d="M0,0h6l-3.0,3.3z" fill="#b3b8bf"/></svg>
<svg style="left:307px;top:117px;" width="7" height="4.3" viewBox="0 0 7 4.3"><path d="M0,0h6l-3.0,3.3z" fill="#b3b8bf"/></svg>
<svg style="left:19px;top:174px;" width="4" height="7" viewBox="0 0 4 7"><path d="M0,0l4,3.5l-4,3.5z" fill="#b0b3b8"/></svg>
<svg style="left:51px;top:172px;" width="12" height="12" viewBox="0 0 12 12"><rect x="0.5" y="0.5" width="11" height="11" fill="#f1f2f4" stroke="#d6d9de"/><path d="M2.8,6l2.4,2.6l4.4,-5.4" fill="none" stroke="#c9ccd1" stroke-width="1.6"/></svg>
<svg style="left:18px;top:489px;" width="5.5" height="9" viewBox="0 0 5.5 9"><path d="M5.5,0l-5.5,4.5l5.5,4.5z" fill="#a3b0c8"/></svg>
<svg style="left:77px;top:213px;" width="17" height="17" viewBox="0 0 17 17"><g transform="scale(1.0)"><path d="M4.2,0.8h10.3c1.6,0 1.8,2.2 0.2,2.4l-0.9,9.6h-10.6z" fill="#eaf2fc" stroke="#4d82d0" stroke-width="0.9" stroke-linejoin="round"/><path d="M4.3,1l-1,11.8h5" fill="none" stroke="#9fc0ee" stroke-width="1.2"/><path d="M0.8,12.6h11.8l-0.8,3h-10.4z" fill="#ffffff" stroke="#3f73c5" stroke-width="0.9" stroke-linejoin="round"/><text x="7.2" y="10" font-family="Liberation Sans, sans-serif" font-weight="bold" font-size="9.5" fill="#1e9a1e">$</text></g></svg>
<svg style="left:83px;top:239px;" width="16" height="16" viewBox="0 0 16 16"><rect x="0.5" y="0.5" width="15" height="15" rx="1.5" fill="#c9c9c9" stroke="#b5b5b5"/><rect x="3.5" y="1" width="9" height="5" fill="#e3e3e3"/><rect x="9" y="1.8" width="2" height="3.2" fill="#bdbdbd"/><rect x="2.5" y="8.5" width="11" height="6.5" fill="#e6e6e6" stroke="#b9b9b9" stroke-width="0.6"/><rect x="4" y="10.4" width="8" height="0.9" fill="#c2c2c2"/><rect x="4" y="12.4" width="8" height="0.9" fill="#c2c2c2"/></svg>
<svg style="left:169px;top:239px;" width="16" height="16" viewBox="0 0 16 16"><rect x="0.5" y="0.5" width="15" height="15" rx="2.5" fill="#e75f58" stroke="#f0a29c"/><rect x="1.5" y="1.5" width="13" height="6" rx="1.5" fill="#ee7a72" opacity="0.7"/><path d="M5.2,5.2l5.6,5.6M10.8,5.2l-5.6,5.6" stroke="#fff" stroke-width="1.8" stroke-linecap="round"/></svg>
<svg style="left:901px;top:240px;" width="14" height="14" viewBox="0 0 14 14"><circle cx="7" cy="7" r="6.3" fill="#6cbf4a" stroke="#3f8f2b" stroke-width="1"/><circle cx="7" cy="5.5" r="4.6" fill="#9fdc7f" opacity="0.55"/><path d="M7,3.6v6.8M3.6,7h6.8" stroke="#fff" stroke-width="2"/></svg>
<svg style="left:640px;top:274px;" width="7" height="4.3" viewBox="0 0 7 4.3"><path d="M0,0h6l-3.0,3.3z" fill="#b3b8bf"/></svg>
<svg style="left:91px;top:408px;" width="14" height="16" viewBox="0 0 14 16"><path d="M0.5,0.5h8.5l4.5,4.5v10.5h-13z" fill="#fbfbfb" stroke="#bfc3c8"/><path d="M9,0.5v4.5h4.5z" fill="#e3e5e8" stroke="#bfc3c8" stroke-linejoin="round"/></svg>
<svg style="left:117px;top:408px;" width="15" height="16" viewBox="0 0 15 16"><path d="M0.5,0.5h8.5l4.5,4.5v10.5h-13z" fill="#fbfbfb" stroke="#bfc3c8"/><path d="M9,0.5v4.5h4.5z" fill="#e3e5e8" stroke="#bfc3c8" stroke-linejoin="round"/><path d="M11.6,0.9l3,2.9l-8,8.9l-4.1,1.7l1.3,-4.4z" fill="#f3b13c" stroke="#c98522" stroke-width="0.8" stroke-linejoin="round"/><path d="M3.8,10l2.8,2.7l-4.1,1.7z" fill="#f7dfb0"/><path d="M12.4,2.6l1,1l-7.4,8.2l-1,-1z" fill="#f7dfb0" opacity="0.55"/></svg>
<svg style="left:146px;top:408px;" width="16" height="16" viewBox="0 0 16 16"><line x1="10" y1="9.8" x2="14" y2="13.6" stroke="#c48d52" stroke-width="2.6" stroke-linecap="round"/><circle cx="6.3" cy="6.2" r="4.9" fill="#cfe3f9" stroke="#8db1e0" stroke-width="1.3"/></svg>
<svg style="left:173px;top:408px;" width="16" height="17" viewBox="0 0 16 17"><path d="M0.5,0.5h8.5l4.5,4.5v10.5h-13z" fill="#fbfbfb" stroke="#bfc3c8"/><path d="M9,0.5v4.5h4.5z" fill="#e3e5e8" stroke="#bfc3c8" stroke-linejoin="round"/><path transform="translate(5,6)" d="M0.5,3.6h4v-2.8l5,4.7l-5,4.7v-2.8h-4z" fill="#62b548" stroke="#34852a" stroke-width="0.9" stroke-linejoin="round"/></svg>
<svg style="left:198px;top:408px;" width="17" height="17" viewBox="0 0 17 17"><rect x="0.75" y="2.75" width="14.5" height="10.5" fill="#f1f6fd" stroke="#5585d2" stroke-width="1.1"/><path d="M1,3l7,6.3l7,-6.3" fill="none" stroke="#5585d2" stroke-width="1"/><path transform="translate(6,6)" d="M0.5,3.6h4v-2.8l5,4.7l-5,4.7v-2.8h-4z" fill="#62b548" stroke="#34852a" stroke-width="0.9" stroke-linejoin="round"/></svg>
<svg style="left:228px;top:407px;" width="16" height="16" viewBox="0 0 16 16"><rect x="0" y="2" width="16" height="13.5" fill="#2f7be0"/><rect x="1.2" y="5.6" width="3.7" height="2.2" fill="#ffffff"/><rect x="6.2" y="5.6" width="3.7" height="2.2" fill="#ffffff"/><rect x="11.2" y="5.6" width="3.7" height="2.2" fill="#ffffff"/><rect x="1.2" y="8.899999999999999" width="3.7" height="2.2" fill="#ffffff"/><rect x="6.2" y="8.899999999999999" width="3.7" height="2.2" fill="#ffffff"/><rect x="11.2" y="8.899999999999999" width="3.7" height="2.2" fill="#ffffff"/><rect x="1.2" y="12.2" width="3.7" height="2.2" fill="#ffffff"/><rect x="6.2" y="12.2" width="3.7" height="2.2" fill="#ffffff"/><rect x="11.2" y="12.2" width="3.7" height="2.2" fill="#ffffff"/><path transform="translate(5.5,0) scale(0.95)" d="M0,0h11v2.2l-3.8,2.8v3.2h-3.4v-3.2l-3.8,-2.8z" fill="#f39a1f"/><path transform="translate(5.5,0) scale(0.95)" d="M0,0h11v2h-11z" fill="#d57a10"/></svg>
<svg style="left:254px;top:408px;" width="16" height="16" viewBox="0 0 16 16"><rect x="0.75" y="7.75" width="14.5" height="5.5" fill="#ffffff" stroke="#2f7be0" stroke-width="1.5"/><rect x="2.5" y="10" width="1.6" height="2" fill="#2f7be0"/><path transform="translate(4.5,1.5) scale(0.95)" d="M0,0h11v2.2l-3.8,2.8v3.2h-3.4v-3.2l-3.8,-2.8z" fill="#f39a1f"/><path transform="translate(4.5,1.5) scale(0.95)" d="M0,0h11v2h-11z" fill="#d57a10"/></svg>
<svg style="left:280px;top:407px;" width="16" height="16" viewBox="0 0 16 16"><rect x="0.75" y="5.25" width="14.5" height="7.5" fill="#d6e7fb" stroke="#2f7be0" stroke-width="1.5"/><rect x="3" y="8" width="6" height="2" fill="#ffffff"/><line x1="9" y1="8.5" x2="4.5" y2="13" stroke="#f39a1f" stroke-width="1.8" stroke-linecap="round"/><circle cx="10.7" cy="5.3" r="3.3" fill="#cfe3f9" stroke="#8db1e0" stroke-width="1.1"/></svg>
<svg style="left:310px;top:408px;" width="16" height="16" viewBox="0 0 16 16"><rect x="0" y="3.3" width="12" height="3.2" fill="#3b4170"/><rect x="0.8" y="4" width="10.4" height="1.2" fill="#9aa0c8"/><rect x="4" y="9" width="12" height="3.6" fill="#3b4170"/><rect x="4.8" y="9.7" width="10.4" height="1.2" fill="#9aa0c8"/><path d="M6,6.5l3,2.5" stroke="#3b4170" stroke-width="1.2"/></svg>
<svg style="left:336px;top:408px;" width="17" height="16" viewBox="0 0 17 16"><path d="M9,1.4h-7.4l4.2,4.6l-4.2,4.6h7.4" fill="none" stroke="#f39a1f" stroke-width="2" stroke-linejoin="miter"/><rect x="7.5" y="5.5" width="9" height="10" fill="#2f7be0"/><rect x="8.7" y="6.8" width="6.6" height="2" fill="#ffffff"/><rect x="8.7" y="9.6" width="6.6" height="2" fill="#f8d24a"/><rect x="8.7" y="12.4" width="6.6" height="2" fill="#fff3b0"/></svg>
<svg style="left:382px;top:414px;" width="9" height="5.4" viewBox="0 0 9 5.4"><path d="M0,0h8l-4.0,4.4z" fill="#4b4f58"/></svg>
<svg style="left:401px;top:408px;" width="16" height="16" viewBox="0 0 16 16"><defs><radialGradient id="cg401" cx="0.5" cy="0.35" r="0.7"><stop offset="0" stop-color="#ffffff"/><stop offset="0.7" stop-color="#f1f5fb"/><stop offset="1" stop-color="#d9e4f3"/></radialGradient></defs><circle cx="8" cy="8" r="6.6" fill="url(#cg401)" stroke="#a9c3e8" stroke-width="1.6"/></svg>
<svg style="left:91px;top:455px;" width="4" height="7" viewBox="0 0 4 7"><path d="M0,0l4,3.5l-4,3.5z" fill="#000"/></svg>
<svg style="left:90px;top:577px;" width="6" height="10" viewBox="0 0 6 10"><path d="M6,0l-6,5.0l6,5.0z" fill="#3a4a78"/></svg>
<svg style="left:522px;top:577px;" width="6" height="10" viewBox="0 0 6 10"><path d="M0,0l6,5.0l-6,5.0z" fill="#3a4a78"/></svg>
<svg style="left:549px;top:407px;" width="16" height="16" viewBox="0 0 16 16"><line x1="10" y1="9.8" x2="14" y2="13.6" stroke="#c48d52" stroke-width="2.6" stroke-linecap="round"/><circle cx="6.3" cy="6.2" r="4.9" fill="#cfe3f9" stroke="#8db1e0" stroke-width="1.3"/></svg>
<svg style="left:576px;top:407px;" width="16" height="17" viewBox="0 0 16 17"><path d="M0.5,0.5h8.5l4.5,4.5v10.5h-13z" fill="#fbfbfb" stroke="#bfc3c8"/><path d="M9,0.5v4.5h4.5z" fill="#e3e5e8" stroke="#bfc3c8" stroke-linejoin="round"/><path transform="translate(5,6)" d="M0.5,3.6h4v-2.8l5,4.7l-5,4.7v-2.8h-4z" fill="#62b548" stroke="#34852a" stroke-width="0.9" stroke-linejoin="round"/></svg>
<svg style="left:601px;top:407px;" width="17" height="17" viewBox="0 0 17 17"><rect x="0.75" y="2.75" width="14.5" height="10.5" fill="#f1f6fd" stroke="#5585d2" stroke-width="1.1"/><path d="M1,3l7,6.3l7,-6.3" fill="none" stroke="#5585d2" stroke-width="1"/><path transform="translate(6,6)" d="M0.5,3.6h4v-2.8l5,4.7l-5,4.7v-2.8h-4z" fill="#62b548" stroke="#34852a" stroke-width="0.9" stroke-linejoin="round"/></svg>
<svg style="left:631px;top:406px;" width="16" height="16" viewBox="0 0 16 16"><rect x="0" y="2" width="16" height="13.5" fill="#2f7be0"/><rect x="1.2" y="5.6" width="3.7" height="2.2" fill="#ffffff"/><rect x="6.2" y="5.6" width="3.7" height="2.2" fill="#ffffff"/><rect x="11.2" y="5.6" width="3.7" height="2.2" fill="#ffffff"/><rect x="1.2" y="8.899999999999999" width="3.7" height="2.2" fill="#ffffff"/><rect x="6.2" y="8.899999999999999" width="3.7" height="2.2" fill="#ffffff"/><rect x="11.2" y="8.899999999999999" width="3.7" height="2.2" fill="#ffffff"/><rect x="1.2" y="12.2" width="3.7" height="2.2" fill="#ffffff"/><rect x="6.2" y="12.2" width="3.7" height="2.2" fill="#ffffff"/><rect x="11.2" y="12.2" width="3.7" height="2.2" fill="#ffffff"/><path transform="translate(5.5,0) scale(0.95)" d="M0,0h11v2.2l-3.8,2.8v3.2h-3.4v-3.2l-3.8,-2.8z" fill="#f39a1f"/><path transform="translate(5.5,0) scale(0.95)" d="M0,0h11v2h-11z" fill="#d57a10"/></svg>
<svg style="left:657px;top:407px;" width="16" height="16" viewBox="0 0 16 16"><rect x="0.75" y="7.75" width="14.5" height="5.5" fill="#ffffff" stroke="#2f7be0" stroke-width="1.5"/><rect x="2.5" y="10" width="1.6" height="2" fill="#2f7be0"/><path transform="translate(4.5,1.5) scale(0.95)" d="M0,0h11v2.2l-3.8,2.8v3.2h-3.4v-3.2l-3.8,-2.8z" fill="#f39a1f"/><path transform="translate(4.5,1.5) scale(0.95)" d="M0,0h11v2h-11z" fill="#d57a10"/></svg>
<svg style="left:683px;top:406px;" width="16" height="16" viewBox="0 0 16 16"><rect x="0.75" y="5.25" width="14.5" height="7.5" fill="#d6e7fb" stroke="#2f7be0" stroke-width="1.5"/><rect x="3" y="8" width="6" height="2" fill="#ffffff"/><line x1="9" y1="8.5" x2="4.5" y2="13" stroke="#f39a1f" stroke-width="1.8" stroke-linecap="round"/><circle cx="10.7" cy="5.3" r="3.3" fill="#cfe3f9" stroke="#8db1e0" stroke-width="1.1"/></svg>
<svg style="left:713px;top:407px;" width="16" height="16" viewBox="0 0 16 16"><rect x="0" y="3.3" width="12" height="3.2" fill="#3b4170"/><rect x="0.8" y="4" width="10.4" height="1.2" fill="#9aa0c8"/><rect x="4" y="9" width="12" height="3.6" fill="#3b4170"/><rect x="4.8" y="9.7" width="10.4" height="1.2" fill="#9aa0c8"/><path d="M6,6.5l3,2.5" stroke="#3b4170" stroke-width="1.2"/></svg>
<svg style="left:739px;top:407px;" width="17" height="16" viewBox="0 0 17 16"><path d="M9,1.4h-7.4l4.2,4.6l-4.2,4.6h7.4" fill="none" stroke="#f39a1f" stroke-width="2" stroke-linejoin="miter"/><rect x="7.5" y="5.5" width="9" height="10" fill="#2f7be0"/><rect x="8.7" y="6.8" width="6.6" height="2" fill="#ffffff"/><rect x="8.7" y="9.6" width="6.6" height="2" fill="#f8d24a"/><rect x="8.7" y="12.4" width="6.6" height="2" fill="#fff3b0"/></svg>
<svg style="left:765px;top:407px;" width="16" height="16" viewBox="0 0 16 16"><rect x="0" y="0" width="16" height="16" fill="#2f7be0"/><rect x="1.2" y="1.2" width="4" height="2" fill="#f8d24a"/><rect x="6.2" y="1.2" width="2.3" height="2" fill="#ffffff"/><rect x="9.3" y="1.2" width="2.3" height="2" fill="#ffffff"/><rect x="12.4" y="1.2" width="2.3" height="2" fill="#ffffff"/><rect x="1.2" y="4.0" width="4" height="2" fill="#f8d24a"/><rect x="6.2" y="4.0" width="2.3" height="2" fill="#ffffff"/><rect x="9.3" y="4.0" width="2.3" height="2" fill="#ffffff"/><rect x="12.4" y="4.0" width="2.3" height="2" fill="#ffffff"/><rect x="1.2" y="6.8" width="4" height="2" fill="#f8d24a"/><rect x="6.2" y="6.8" width="2.3" height="2" fill="#ffffff"/><rect x="9.3" y="6.8" width="2.3" height="2" fill="#ffffff"/><rect x="12.4" y="6.8" width="2.3" height="2" fill="#ffffff"/><rect x="1.2" y="9.599999999999998" width="4" height="2" fill="#f8d24a"/><rect x="6.2" y="9.599999999999998" width="2.3" height="2" fill="#ffffff"/><rect x="9.3" y="9.599999999999998" width="2.3" height="2" fill="#ffffff"/><rect x="12.4" y="9.599999999999998" width="2.3" height="2" fill="#ffffff"/><rect x="1.2" y="12.399999999999999" width="4" height="2" fill="#f8d24a"/><rect x="6.2" y="12.399999999999999" width="2.3" height="2" fill="#ffffff"/><rect x="9.3" y="12.399999999999999" width="2.3" height="2" fill="#ffffff"/><rect x="12.4" y="12.399999999999999" width="2.3" height="2" fill="#ffffff"/></svg>
<svg style="left:791px;top:409px;" width="16" height="14" viewBox="0 0 16 14"><rect x="0" y="0" width="16" height="14" fill="#2f7be0"/><rect x="1.2" y="4.4" width="3.9" height="2.20" fill="#d6e7fb"/><rect x="6.1000000000000005" y="4.4" width="3.9" height="2.20" fill="#d6e7fb"/><rect x="11.0" y="4.4" width="3.9" height="2.20" fill="#d6e7fb"/><rect x="1.2" y="7.5" width="3.9" height="2.20" fill="#d6e7fb"/><rect x="6.1000000000000005" y="7.5" width="3.9" height="2.20" fill="#d6e7fb"/><rect x="11.0" y="7.5" width="3.9" height="2.20" fill="#d6e7fb"/><rect x="1.2" y="10.6" width="3.9" height="2.20" fill="#d6e7fb"/><rect x="6.1000000000000005" y="10.6" width="3.9" height="2.20" fill="#d6e7fb"/><rect x="11.0" y="10.6" width="3.9" height="2.20" fill="#d6e7fb"/></svg>
<svg style="left:817px;top:408px;" width="16" height="14" viewBox="0 0 16 14"><rect x="0" y="0" width="16" height="14" fill="#2f7be0"/><rect x="1.2" y="1.2" width="13.6" height="1.6" fill="#d6e7fb"/><rect x="1.2" y="4.4" width="3.9" height="2.2" fill="#ffffff"/><rect x="6.1000000000000005" y="4.4" width="3.9" height="2.2" fill="#ffffff"/><rect x="11.0" y="4.4" width="3.9" height="2.2" fill="#ffffff"/><rect x="1.2" y="7.5" width="3.9" height="2.2" fill="#ffffff"/><rect x="6.1000000000000005" y="7.5" width="3.9" height="2.2" fill="#d6e7fb"/><rect x="11.0" y="7.5" width="3.9" height="2.2" fill="#d6e7fb"/><rect x="1.2" y="10.600000000000001" width="3.9" height="2.2" fill="#ffffff"/><rect x="6.1000000000000005" y="10.600000000000001" width="3.9" height="2.2" fill="#d6e7fb"/><rect x="11.0" y="10.600000000000001" width="3.9" height="2.2" fill="#d6e7fb"/></svg>
<svg style="left:847px;top:407px;" width="16" height="16" viewBox="0 0 16 16"><defs><radialGradient id="cg847" cx="0.5" cy="0.35" r="0.7"><stop offset="0" stop-color="#ffffff"/><stop offset="0.7" stop-color="#f1f5fb"/><stop offset="1" stop-color="#d9e4f3"/></radialGradient></defs><circle cx="8" cy="8" r="6.6" fill="url(#cg847)" stroke="#a9c3e8" stroke-width="1.6"/></svg>
<svg style="left:549px;top:454px;" width="4" height="7" viewBox="0 0 4 7"><path d="M0,0l4,3.5l-4,3.5z" fill="#000"/></svg>
</body></html>
